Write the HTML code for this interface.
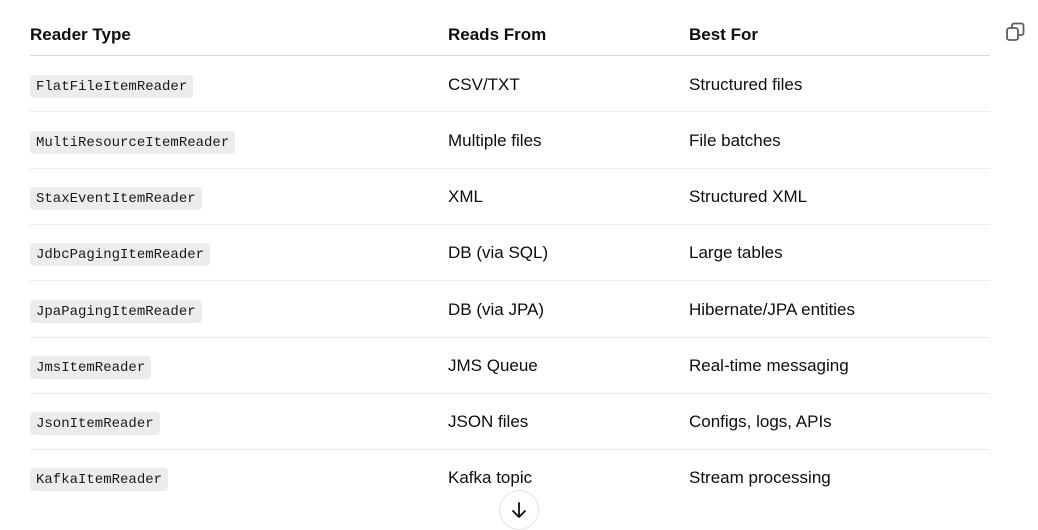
<!DOCTYPE html>
<html><head><style>
body{margin:0;background:#fff;width:1038px;height:523px;overflow:hidden;position:relative;font-family:"Liberation Sans",sans-serif;color:#0d0d0d}
.hdr{position:absolute;top:25px;font-size:17px;font-weight:bold}
.line{position:absolute;left:30px;width:960px;height:1px;background:#ececec}
.c{position:absolute;font-size:17px;line-height:20px}
.code{position:absolute;left:30px;height:23px;line-height:24px;padding:0 6px;background:#ececec;border-radius:4px;font-family:"Liberation Mono",monospace;font-size:14px;color:#1a1a1a}
</style></head><body>
<div class="hdr" style="left:30px">Reader Type</div>
<div class="hdr" style="left:448px">Reads From</div>
<div class="hdr" style="left:689px">Best For</div>
<div class="line" style="top:55px;background:#d9d9d9"></div>
<div class="line" style="top:111px"></div>
<div class="line" style="top:168px"></div>
<div class="line" style="top:224px"></div>
<div class="line" style="top:280px"></div>
<div class="line" style="top:337px"></div>
<div class="line" style="top:393px"></div>
<div class="line" style="top:449px"></div>

<div class="code" style="top:75px">FlatFileItemReader</div><div class="c" style="left:448px;top:75px">CSV/TXT</div><div class="c" style="left:689px;top:75px">Structured files</div>
<div class="code" style="top:131px">MultiResourceItemReader</div><div class="c" style="left:448px;top:131px">Multiple files</div><div class="c" style="left:689px;top:131px">File batches</div>
<div class="code" style="top:187px">StaxEventItemReader</div><div class="c" style="left:448px;top:187px">XML</div><div class="c" style="left:689px;top:187px">Structured XML</div>
<div class="code" style="top:243px">JdbcPagingItemReader</div><div class="c" style="left:448px;top:243px">DB (via SQL)</div><div class="c" style="left:689px;top:243px">Large tables</div>
<div class="code" style="top:300px">JpaPagingItemReader</div><div class="c" style="left:448px;top:300px">DB (via JPA)</div><div class="c" style="left:689px;top:300px">Hibernate/JPA entities</div>
<div class="code" style="top:356px">JmsItemReader</div><div class="c" style="left:448px;top:356px">JMS Queue</div><div class="c" style="left:689px;top:356px">Real-time messaging</div>
<div class="code" style="top:412px">JsonItemReader</div><div class="c" style="left:448px;top:412px">JSON files</div><div class="c" style="left:689px;top:412px">Configs, logs, APIs</div>
<div class="code" style="top:468px">KafkaItemReader</div><div class="c" style="left:448px;top:468px">Kafka topic</div><div class="c" style="left:689px;top:468px">Stream processing</div>

<svg style="position:absolute;left:1005px;top:21px" width="22" height="22" viewBox="0 0 22 22" fill="none" stroke="#5d5d5d" stroke-width="1.8"><rect x="2" y="7" width="11" height="12" rx="2.5"/><path d="M7 7V4.5A2 2 0 0 1 9 2.5h7.5a2 2 0 0 1 2 2V12a2 2 0 0 1-2 2H13"/></svg>

<div style="position:absolute;left:499px;top:490px;width:38px;height:38px;border:1px solid #e3e3e3;border-radius:50%;background:#fff"></div>
<svg style="position:absolute;left:509px;top:500px" width="20" height="20" viewBox="0 0 20 20" fill="none" stroke="#0d0d0d" stroke-width="1.8" stroke-linecap="round" stroke-linejoin="round"><path d="M10 3v14M4 11l6 6 6-6"/></svg>
</body></html>
